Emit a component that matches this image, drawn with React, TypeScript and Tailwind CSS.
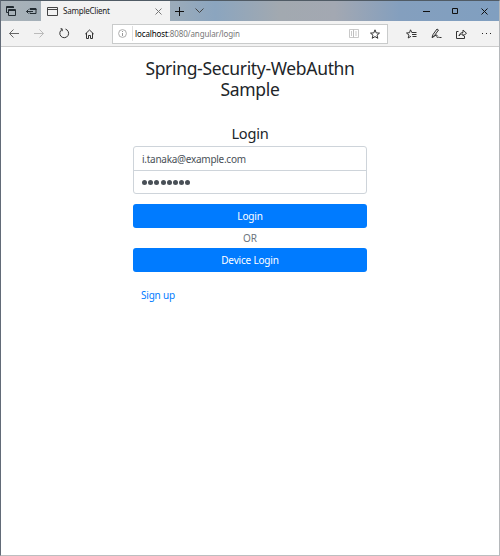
import type { ReactNode } from "react";

function Icon({ w, h, className = "", children }: { w: number; h: number; className?: string; children: ReactNode }) {
  return (
    <svg width={w} height={h} viewBox={`0 0 ${w} ${h}`} fill="none" stroke="currentColor" strokeWidth="1" className={`shrink-0 ${className}`}>
      {children}
    </svg>
  );
}

function TitleBar() {
  return (
    <div className="flex h-5 items-stretch bg-[linear-gradient(90deg,#aab3b9_0%,#a3afb8_9%,#9aabba_35%,#8ba5bf_43%,#a2a9b0_56%,#a3a8b2_67%,#849fbe_80%,#809fc0_100%)] text-[#111]">
      <div className="flex w-10 items-center pl-[5px]">
        <Icon w={10} h={10} className="text-[#222b31]">
          <path d="M.5 6.500V.5H7.500V2M.5 1.500H7.500M.5 6.500H2" />
          <path d="M2.500 3.500H9.500V9.500H2.500ZM2.500 4.500H9.500" />
        </Icon>
        <Icon w={11} h={8} className="ml-[10px] text-[#222b31]">
          <path d="M4 2.500V1.500H10V6.500H4V5.500M4 2.500H10.500M0.500 4.500H7M2.500 2.500L.5 4.500L2.500 6.500" />
        </Icon>
      </div>
      <div className="flex w-[129px] items-center bg-[#f2f2f2] pl-[6px]">
        <Icon w={11} h={9} className="text-[#444]">
          <path d="M.5 .5H10.500V8.500H.5ZM.5 2.500H10.500" />
        </Icon>
        <span className="ml-[5px] w-[92px] text-[8px] leading-[20px] tracking-[-0.22px] text-[#222]">SampleClient</span>
        <Icon w={7} h={7} className="text-[#777]"><path d="M.5 .5L6.500 6.500M6.500 .5L.5 6.500" /></Icon>
      </div>
      <div className="flex flex-1 items-center pl-[5px]">
        <Icon w={9} h={9}><path d="M4.500 0V9M0 4.500H9" /></Icon>
        <Icon w={9} h={6} className="ml-[11px] text-[#444]"><path d="M.5 .5L4.500 4.500L8.500 .5" /></Icon>
        <div className="ml-auto flex items-center pr-[11px]">
          <Icon w={7} h={7}><path d="M0 3.500H7" /></Icon>
          <Icon w={6} h={6} className="ml-[22px]"><path d="M.5 .5H5.500V5.500H.5Z" /></Icon>
          <Icon w={7} h={7} className="ml-[23px]"><path d="M.5 .5L6.500 6.500M6.500 .5L.5 6.500" /></Icon>
        </div>
      </div>
    </div>
  );
}

function Toolbar() {
  return (
    <div className="flex h-[26px] items-center border-b border-[#cdcdcd] bg-[#f2f2f2] pl-2 text-[#333]">
      <Icon w={10} h={9} className="text-[#666]"><path d="M.5 4.500H10M4.500 .5L.5 4.500L4.500 8.500" /></Icon>
      <Icon w={10} h={9} className="ml-[15px] text-[#bbb]"><path d="M0 4.500H9.500M5.500 .5L9.500 4.500L5.500 8.500" /></Icon>
      <Icon w={11} h={11} className="ml-[15px]"><path d="M3 .8H1.500M3.200 .7V3.200M3 1.500A4.400 4.400 0 1 0 6.500 1.100" /></Icon>
      <Icon w={9} h={10} className="ml-[15px]"><path d="M.3 5L4.500 1L8.700 5M1.500 4V9.500H3.500V6.500H5.500V9.500H7.500V4" /></Icon>
      <div className="ml-[18px] flex h-5 w-[276px] items-center border border-[#c9cbcb] bg-white pl-[5px]">
        <Icon w={9} h={9} className="text-[#999]">
          <circle cx="4.500" cy="4.500" r="3.900" strokeWidth=".8" />
          <path d="M4.500 2V3M4.500 4V7" />
        </Icon>
        <div className="ml-[5px] h-[15px] w-px bg-[#dedede]" />
        <span className="ml-[2px] text-[8px] leading-[18px] tracking-[-0.12px] text-[#777]"><span className="text-black">localhost</span>:8080/angular/login</span>
        <Icon w={10} h={9} className="ml-auto text-[#bbb]"><path d="M.5 .5H4.500V8.500H.5ZM4.500 .5H9.500V8.500H4.500ZM2.500 2V7M7 2V7" strokeWidth=".8" /></Icon>
        <Icon w={10} h={10} className="mr-[7px] ml-[11px]"><path d="M5 .8L6.200 3.900L9.500 4.100L7 6.200L7.800 9.300L5 7.600L2.200 9.300L3 6.200L.5 4.100L3.800 3.900Z" /></Icon>
      </div>
      <Icon w={11} h={10} className="ml-[18px]"><path d="M10.500 3.500H5.800L4.500 .8L3.500 3.700L.5 4L3 6.100L2.200 9L5 7.300M6 5.500H10.500M6.500 7.500H10.500" /></Icon>
      <Icon w={11} h={11} className="ml-[14px]"><path d="M1 9.500L2 6.500L6 1L7.500 2L3.500 7.500L1 9.500C3 9 5 6.500 6 7C6.500 7.500 5 9.300 6.500 9.500C7.500 9.500 8 8.500 8.500 9.500H10.500" /></Icon>
      <Icon w={11} h={10} className="ml-[14px]"><path d="M2.500 2.500H.5V9.500H8.500V7M3 7C3.500 4.500 5 3.500 7 3.500V1L10.500 4.300L7 7V5C5 5 4 5.500 3 7Z" /></Icon>
      <div className="ml-[15px] flex gap-[3px]">
        <i className="size-px bg-[#222]" /><i className="size-px bg-[#222]" /><i className="size-px bg-[#222]" /><span />
      </div>
    </div>
  );
}

function PrimaryButton({ children }: { children: ReactNode }) {
  return (
    <button className="block h-6 w-full rounded-[3px] bg-[#007bff] text-center text-[10px] leading-[25px] tracking-[-0.18px] text-white">
      {children}
    </button>
  );
}

export default function App() {
  return (
    <div className="flex h-[556px] w-[500px] flex-col overflow-hidden border border-t-[#505b65] border-r-[#b5b8bb] border-b-[#bcbec0] border-l-[#626b78] bg-white font-['Noto_Sans','Open_Sans',sans-serif]">
      <TitleBar />
      <Toolbar />
      <main className="mx-auto mt-[11px] w-[234px] text-[#212529]">
        <h1 className="text-center text-[17.500px] leading-[21px] tracking-[-0.33px]">
          Spring-Security-WebAuthn<br />Sample
        </h1>
        <h2 className="mt-[23px] text-center text-[14.600px] leading-[20px] tracking-[-0.2px]">Login</h2>
        <form className="mt-[3px]" onSubmit={(e) => e.preventDefault()}>
          <div className="h-[48px] rounded-[3px] border border-[#ced4da] text-[10px] text-[#495057]">
            <div className="h-6 border-b border-[#ced4da] pl-2 leading-[24px] tracking-[-0.27px]">i.tanaka@example.com</div>
            <div className="flex h-[23px] items-center gap-[1.200px] pl-2">
              {Array.from({ length: 8 }, (_, i) => <i key={i} className="size-[5px] rounded-full bg-[#495057]" />)}
            </div>
          </div>
          <div className="mt-[10px]"><PrimaryButton>Login</PrimaryButton></div>
          <p className="h-5 text-center text-[10px] leading-[21px] text-[#6c757d]">OR</p>
          <PrimaryButton>Device Login</PrimaryButton>
        </form>
        <a className="mt-[15px] ml-2 inline-block text-[10px] leading-4 tracking-[-0.2px] text-[#007bff]">Sign up</a>
      </main>
    </div>
  );
}
